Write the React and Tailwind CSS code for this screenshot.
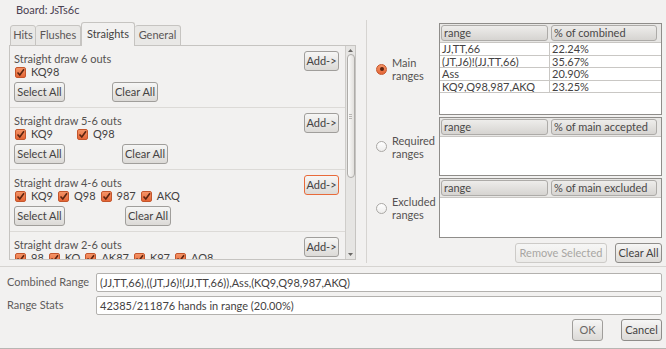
function Check({ label, className = '' }) {
  return (
    <span className={`flex items-center gap-[5px] ${className}`}>
      <span className="w-[11px] h-[11px] rounded-[2px] border border-[#c4562c] bg-linear-to-b from-[#f59466] to-[#e46535] flex items-center justify-center">
        <svg width="9" height="9" viewBox="0 0 9 9">
          <polyline points="1.5,4.5 3.8,7 8,1.2" fill="none" stroke="#5b2410" strokeWidth="1.6" />
        </svg>
      </span>
      <span>{label}</span>
    </span>
  )
}

function Btn({ children, className = '' }) {
  return (
    <div
      className={`flex items-center justify-center h-[20px] rounded-[3px] border bg-linear-to-b from-[#f6f6f5] to-[#dcdad7] whitespace-nowrap ${className}`}
    >
      {children}
    </div>
  )
}

function Section({ title, checks, clearLeft, focus, last }) {
  return (
    <div className={`flex pt-[6px] pb-[5px] pl-[4px] pr-[6px] ${last ? '' : 'border-b border-[#dcdad7]'}`}>
      <div className="flex-1 flex flex-col">
        <div className="h-[13px] leading-[13px] text-[#555151]">{title}</div>
        <div className="h-[14px] flex items-center pl-[1px]">{checks}</div>
        {/* the last group is scrolled past its buttons, so they are left out */}
        {!last && (
          <div className="flex mt-[3px] h-[20px]">
            <Btn className="w-[51px] border-[#a09e9b]">Select All</Btn>
            <Btn className={`w-[46px] border-[#a09e9b] ${clearLeft}`}>Clear All</Btn>
          </div>
        )}
      </div>
      <Btn className={`w-[35px] -mt-px ${focus ? 'border-[#e86a3a]' : 'border-[#a09e9b]'}`}>Add-&gt;</Btn>
    </div>
  )
}

function Radio({ on }) {
  return on ? (
    <span className="w-[11px] h-[11px] rounded-full border border-[#c4562c] bg-linear-to-b from-[#f59466] to-[#e46535] flex items-center justify-center">
      <span className="w-[4px] h-[4px] rounded-full bg-[#5b2410]" />
    </span>
  ) : (
    <span className="w-[11px] h-[11px] rounded-full border border-[#aaa8a5] bg-linear-to-b from-[#ffffff] to-[#eeedec]" />
  )
}

function Table({ col2, rows = [], height }) {
  return (
    <div className={`w-[223px] ${height} border border-[#8f8d8a] bg-white flex flex-col`}>
      <div className="h-[19px] flex items-center gap-[3px] pl-[1px] pr-[4px] bg-[#e8e7e5] border-b border-[#c8c6c3]">
        <div className="w-[107px] h-[16px] leading-[14px] pl-[2px] rounded-[3px] border border-[#adaba8] bg-linear-to-b from-[#eeedeb] to-[#d6d4d1] text-[#4a4848]">
          range
        </div>
        <div className="flex-1 h-[16px] leading-[14px] pl-[2px] rounded-[3px] border border-[#adaba8] bg-linear-to-b from-[#eeedeb] to-[#d6d4d1] text-[#4a4848] whitespace-nowrap">
          {col2}
        </div>
      </div>
      {rows.map(([a, b]) => (
        <div key={a} className="h-[12.5px] flex border-b border-[#c9c7c4] leading-[12px]">
          <div className="w-[110px] pl-[2px] border-r border-[#c9c7c4] whitespace-nowrap overflow-hidden">{a}</div>
          <div className="flex-1 pl-[2px]">{b}</div>
        </div>
      ))}
    </div>
  )
}

function RangeRow({ on, top, bottom, table }) {
  return (
    <div className="flex items-center">
      <div className="w-[72px] flex items-center pl-[9px] gap-[5px]">
        <Radio on={on} />
        <div className="leading-[13px] text-[#555151]">
          <div>{top}</div>
          <div>{bottom}</div>
        </div>
      </div>
      {table}
    </div>
  )
}

export default function App() {
  return (
    <div className="w-[666px] h-[349px] bg-[#f2f1f0] font-[Lato,sans-serif] text-[11px] text-[#444242] flex flex-col overflow-hidden border-b border-[#b8b6b3]">
      <div className="flex h-[263px]">
        <div className="w-[366px] flex flex-col pl-[9px]">
          <div className="h-[23px] pl-[7px] pt-[3px] leading-[14px] text-[#4a4150]">Board: JsTs6c</div>
          <div className="h-[23px] flex items-end pl-[1px] -mb-px relative">
            <div className="w-[26px] h-[21px] flex items-center justify-center rounded-t-[3px] border border-[#c6c4c1] bg-[#e9e8e6] text-[#5a5656]">Hits</div>
            <div className="w-[45px] h-[21px] flex items-center justify-center rounded-t-[3px] border border-l-0 border-[#c6c4c1] bg-[#e9e8e6] text-[#5a5656]">Flushes</div>
            <div className="w-[54px] h-[24px] flex items-center justify-center rounded-t-[3px] border border-b-0 border-[#c6c4c1] bg-[#f2f1f0] text-[#444242]">Straights</div>
            <div className="w-[46px] h-[21px] flex items-center justify-center rounded-t-[3px] border border-l-0 border-[#c6c4c1] bg-[#e9e8e6] text-[#5a5656]">General</div>
          </div>
          <div className="w-[347px] h-[215px] border border-[#c6c4c1] flex">
            <div className="flex-1 overflow-hidden">
              <Section
                title="Straight draw 6 outs"
                checks={<Check label="KQ98" />}
                clearLeft="ml-[47px]"
              />
              <Section
                title="Straight draw 5-6 outs"
                checks={
                  <>
                    <Check label="KQ9" />
                    <Check label="Q98" className="ml-[24px]" />
                  </>
                }
                clearLeft="ml-[57px]"
              />
              <Section
                title="Straight draw 4-6 outs"
                checks={
                  <div className="flex gap-[5px]">
                    <Check label="KQ9" />
                    <Check label="Q98" />
                    <Check label="987" />
                    <Check label="AKQ" />
                  </div>
                }
                clearLeft="ml-[60px]"
                focus
              />
              <Section
                title="Straight draw 2-6 outs"
                checks={
                  <div className="flex gap-[5px]">
                    <Check label="98" />
                    <Check label="KQ" />
                    <Check label="AK87" />
                    <Check label="K97" />
                    <Check label="AQ8" />
                  </div>
                }
                last
              />
            </div>
            <div className="w-[10px] border-l border-[#cfcdca] bg-[#e6e5e3] flex flex-col items-center">
              <svg width="7" height="5" viewBox="0 0 7 5" className="mt-[2px]">
                <polygon points="3.5,1 6,4 1,4" fill="#6a6866" />
              </svg>
              <div className="w-[8px] h-[124px] mt-px rounded-full border border-[#aeaca9] bg-linear-to-r from-[#fbfbfa] to-[#e2e0dd] flex items-center justify-center">
                <div className="flex flex-col gap-px">
                  <div className="w-[3px] h-px bg-[#b8b6b3]" />
                  <div className="w-[3px] h-px bg-[#b8b6b3]" />
                  <div className="w-[3px] h-px bg-[#b8b6b3]" />
                </div>
              </div>
              <div className="flex-1" />
              <svg width="7" height="5" viewBox="0 0 7 5" className="mb-[2px]">
                <polygon points="1,1 6,1 3.5,4" fill="#6a6866" />
              </svg>
            </div>
          </div>
        </div>
        <div className="w-px bg-[#d6d4d1] mt-[20px]" />
        <div className="flex-1 flex flex-col pt-[23px] gap-[2px]">
          <RangeRow
            on
            top="Main"
            bottom="ranges"
            table={
              <Table
                height="h-[92px]"
                col2="% of combined"
                rows={[
                  ['JJ,TT,66', '22.24%'],
                  ['(JT,J6)!(JJ,TT,66)', '35.67%'],
                  ['Ass', '20.90%'],
                  ['KQ9,Q98,987,AKQ', '23.25%'],
                ]}
              />
            }
          />
          <RangeRow
            top="Required"
            bottom="ranges"
            table={<Table height="h-[59px]" col2="% of main accepted" />}
          />
          <RangeRow
            top="Excluded"
            bottom="ranges"
            table={<Table height="h-[60px]" col2="% of main excluded" />}
          />
          <div className="flex justify-end gap-[8px] mt-[3px] pr-[4px]">
            <Btn className="w-[92px] border-[#cdcbc8] text-[#a8a6a3] from-[#f4f3f2] to-[#ebeae8]">Remove Selected</Btn>
            <Btn className="w-[47px] border-[#8f8d8a] from-[#dddcda] to-[#cbc9c6]">Clear All</Btn>
          </div>
        </div>
      </div>
      <div className="h-px bg-[#d6d4d1] mt-[3px]" />
      <div className="flex flex-col pt-[6px] pl-[7px] pr-[4px] gap-[4px] text-[#5f5c5c]">
        <div className="flex items-center">
          <div className="w-[89px] shrink-0 whitespace-nowrap">Combined Range</div>
          <div className="flex-1 h-[19px] rounded-[2px] border border-[#b3b1ae] bg-white pl-[3px] leading-[17px] text-[#444242] whitespace-nowrap overflow-hidden">
            (JJ,TT,66),((JT,J6)!(JJ,TT,66)),Ass,(KQ9,Q98,987,AKQ)
          </div>
        </div>
        <div className="flex items-center">
          <div className="w-[89px] shrink-0 whitespace-nowrap">Range Stats</div>
          <div className="flex-1 h-[19px] rounded-[2px] border border-[#b3b1ae] bg-white pl-[3px] leading-[17px] text-[#444242] whitespace-nowrap overflow-hidden">
            42385/211876 hands in range (20.00%)
          </div>
        </div>
        <div className="flex justify-end gap-[18px] text-[#444242]">
          <Btn className="w-[31px] h-[22px] border-[#a09e9b] text-[#6a6866]">OK</Btn>
          <Btn className="w-[41px] h-[22px] border-[#8f8d8a]">Cancel</Btn>
        </div>
      </div>
    </div>
  )
}
